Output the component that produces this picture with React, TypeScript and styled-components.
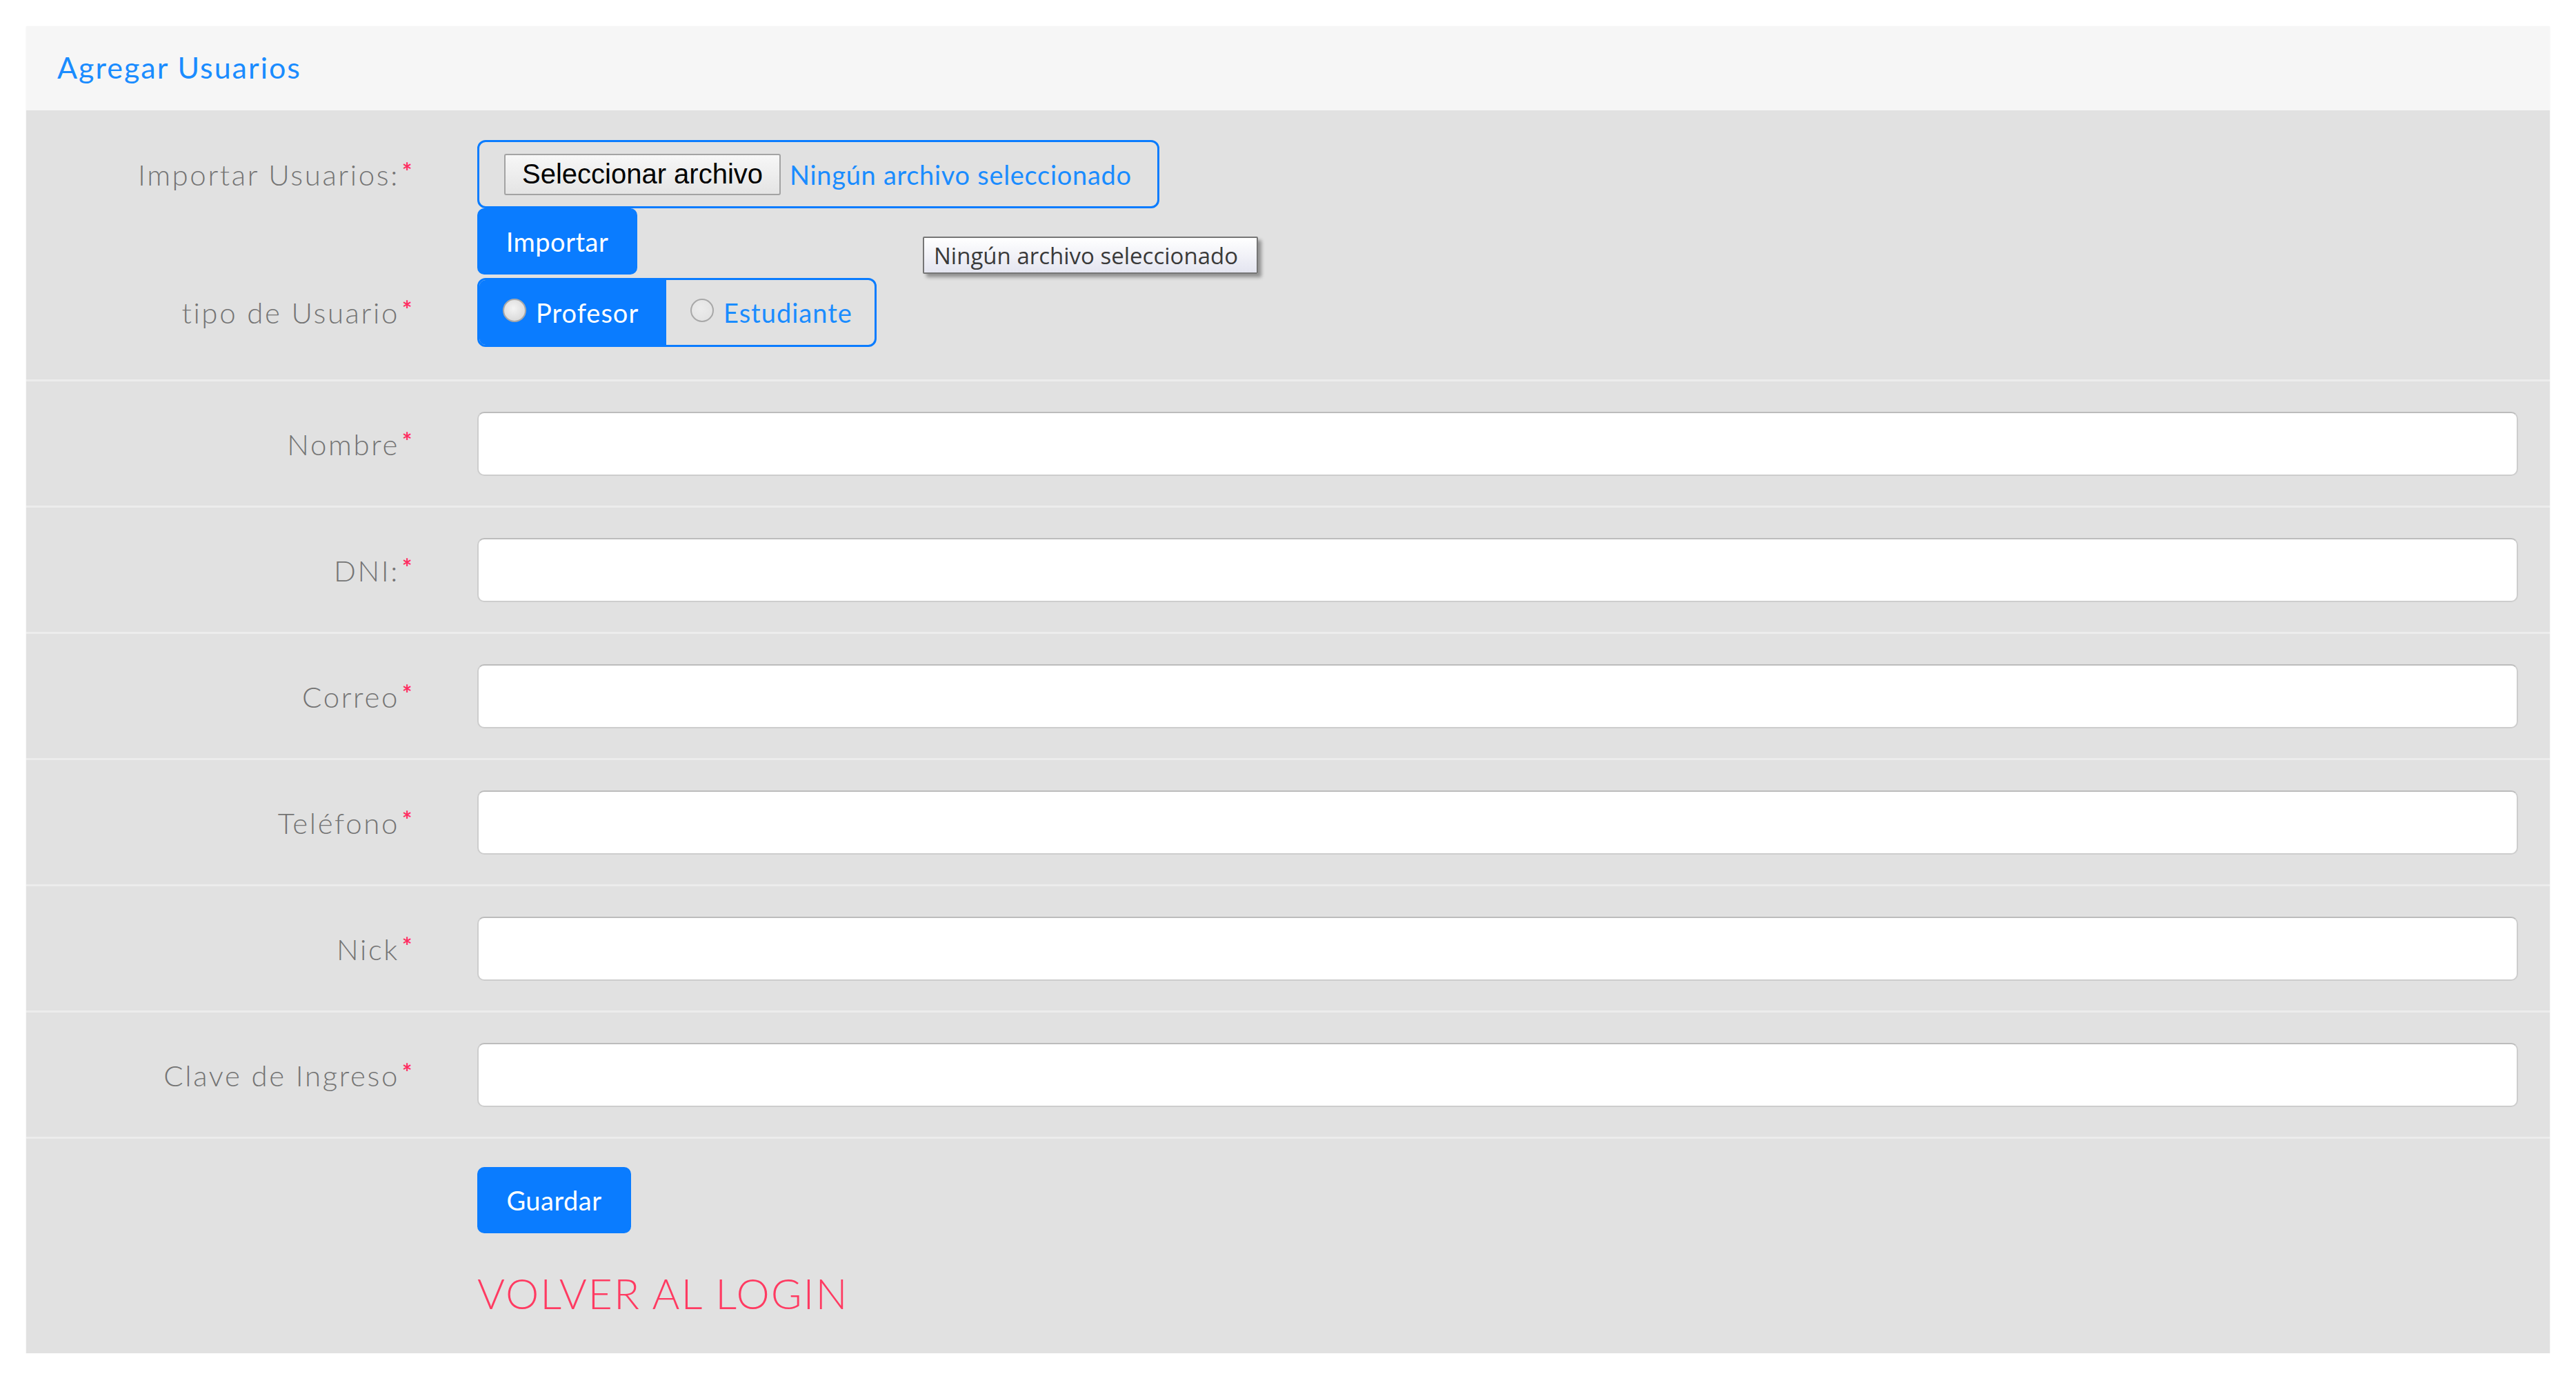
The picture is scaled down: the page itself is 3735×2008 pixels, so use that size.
import React from "react";
import styled, { createGlobalStyle } from "styled-components";

const GlobalStyle = createGlobalStyle`
  html, body {
    margin: 0;
    padding: 0;
    background: #ffffff;
  }
  body {
    font-family: Lato, "Open Sans", sans-serif;
  }
  * {
    box-sizing: border-box;
  }
`;

const BLUE = "#0a7cff";

// 페이지 바깥 여백
const Page = styled.div`
  padding: 38px 38px 0 38px;
`;

const Panel = styled.div`
  background: #e1e1e1;
  box-shadow: 0px 1px 3px 0px rgba(0, 0, 0, 0.06);
`;

const PanelHeader = styled.div`
  display: flex;
  align-items: center;
  height: 122px;
  padding-left: 45px;
  background: #f6f6f6;
`;

const Title = styled.h3`
  margin: 0 0 4px 0;
  font-family: Lato, sans-serif;
  font-size: 43px;
  font-weight: 400;
  letter-spacing: 2px;
  color: #1a8cff;
`;

// 폼 한 줄 (라벨 + 입력)
const FormRow = styled.div<{ $top?: boolean }>`
  display: grid;
  grid-template-columns: 562px 1fr;
  column-gap: 92px;
  align-items: center;
  padding: ${(p) => (p.$top ? "43px 46px 47px 0" : "44px 46px 43px 0")};
  border-top: ${(p) => (p.$top ? "none" : "3px solid #ececec")};
`;

const ImportRow = styled(FormRow)`
  position: relative;
  grid-template-rows: auto auto auto;
`;

const Label = styled.label`
  text-align: right;
  font-family: Lato, sans-serif;
  font-size: 42px;
  font-weight: 300;
  letter-spacing: 2.6px;
  color: #747474;
  white-space: nowrap;
`;

const Required = styled.span`
  margin-left: 4px;
  font-size: 34px;
  font-weight: 700;
  vertical-align: top;
  line-height: 1.2;
  color: #ff2d62;
`;

// 파일 선택 박스
const FileBox = styled.div`
  display: flex;
  align-items: center;
  width: 989px;
  height: 99px;
  padding-left: 36px;
  border: 3px solid ${BLUE};
  border-radius: 12px;
`;

const FileButton = styled.button`
  height: 60px;
  padding: 0 24px;
  border: 2px solid #a3a3a3;
  border-radius: 3px;
  background: linear-gradient(180deg, #f7f7f7 0%, #e4e4e4 100%);
  font-family: "Liberation Sans", Arial, sans-serif;
  font-size: 40px;
  color: #000;
`;

const FileName = styled.span`
  margin-left: 13px;
  font-family: Lato, sans-serif;
  font-size: 38px;
  font-weight: 400;
  letter-spacing: 0.7px;
  color: #1a8cff;
`;

const BlueButton = styled.button<{ $w: number; $mb?: number }>`
  width: ${(p) => p.$w}px;
  height: 96px;
  margin-bottom: ${(p) => p.$mb ?? 0}px;
  border: none;
  border-radius: 10px;
  background: ${BLUE};
  font-family: Lato, sans-serif;
  font-size: 38px;
  font-weight: 400;
  letter-spacing: 0.5px;
  color: #fff;
`;

const RadioGroup = styled.div`
  display: flex;
  width: 579px;
  height: 100px;
  border: 3px solid ${BLUE};
  border-radius: 12px;
  overflow: hidden;
`;

const RadioOption = styled.label<{ $active?: boolean; $w: number }>`
  display: flex;
  align-items: center;
  gap: 14px;
  width: ${(p) => p.$w}px;
  padding-left: ${(p) => (p.$active ? 34 : 35)}px;
  background: ${(p) => (p.$active ? BLUE : "transparent")};
  font-family: Lato, sans-serif;
  font-size: 38px;
  letter-spacing: 1px;
  color: ${(p) => (p.$active ? "#fff" : "#1a8cff")};
`;

const RadioCircle = styled.input<{ $filled?: boolean }>`
  appearance: none;
  flex-shrink: 0;
  width: 34px;
  height: 34px;
  margin: 0 0 6px 0;
  border-radius: 50%;
  border: 2px solid #a8a8a8;
  background: ${(p) =>
    p.$filled
      ? "radial-gradient(circle at 45% 40%, #f4f4f4 0%, #dcdcdc 70%, #c8c8c8 100%)"
      : "radial-gradient(circle at 45% 40%, #ececec 0%, #e0e0e0 100%)"};
`;

// 툴팁 (브라우저 기본 툴팁 모양)
const Tooltip = styled.div`
  position: absolute;
  left: 1300px;
  top: 183px;
  display: flex;
  align-items: center;
  width: 486px;
  height: 54px;
  padding: 0 14px;
  border: 2px solid #767676;
  border-radius: 2px;
  background: linear-gradient(180deg, #ffffff 0%, #e4e5f0 100%);
  box-shadow: 5px 5px 5px rgba(0, 0, 0, 0.35);
  font-family: "Open Sans", sans-serif;
  font-size: 33px;
  color: #3a3a3a;
  white-space: nowrap;
`;

const TextInput = styled.input`
  width: 100%;
  height: 93px;
  border: 2px solid #cdcdcd;
  border-top-color: #bcbcbc;
  border-radius: 10px;
  background: #fff;
  font-family: Lato, sans-serif;
  font-size: 38px;
  padding: 0 20px;
  outline: none;
`;

const Footer = styled.div`
  display: grid;
  grid-template-columns: 562px 1fr;
  column-gap: 92px;
  padding: 41px 46px 51px 0;
  border-top: 3px solid #ececec;
`;

const FooterActions = styled.div`
  grid-column: 2;
  display: flex;
  flex-direction: column;
  align-items: flex-start;
`;

const BackLink = styled.a`
  margin-top: 50px;
  font-family: Lato, sans-serif;
  font-size: 61px;
  font-weight: 300;
  letter-spacing: 2px;
  line-height: 1.2;
  color: #ff3b62;
  text-decoration: none;
`;

const fields = ["Nombre", "DNI:", "Correo", "Teléfono", "Nick", "Clave de Ingreso"];

export default function App() {
  return (
    <>
      <GlobalStyle />
      <Page>
        <Panel>
          <PanelHeader>
            <Title>Agregar Usuarios</Title>
          </PanelHeader>

          <ImportRow $top>
            <Label>
              Importar Usuarios:<Required>*</Required>
            </Label>
            <FileBox>
              <FileButton type="button">Seleccionar archivo</FileButton>
              <FileName>Ningún archivo seleccionado</FileName>
            </FileBox>
            <span />
            <BlueButton type="button" $w={232} $mb={5}>
              Importar
            </BlueButton>
            <Label>
              tipo de Usuario<Required>*</Required>
            </Label>
            <RadioGroup>
              <RadioOption $active $w={271}>
                <RadioCircle type="radio" name="tipo" $filled />
                Profesor
              </RadioOption>
              <RadioOption $w={302}>
                <RadioCircle type="radio" name="tipo" />
                Estudiante
              </RadioOption>
            </RadioGroup>
            <Tooltip>Ningún archivo seleccionado</Tooltip>
          </ImportRow>

          {fields.map((f) => (
            <FormRow key={f}>
              <Label>
                {f}
                <Required>*</Required>
              </Label>
              <TextInput type="text" />
            </FormRow>
          ))}

          <Footer>
            <FooterActions>
              <BlueButton type="button" $w={223}>
                Guardar
              </BlueButton>
              <BackLink href="#">VOLVER AL LOGIN</BackLink>
            </FooterActions>
          </Footer>
        </Panel>
      </Page>
    </>
  );
}
